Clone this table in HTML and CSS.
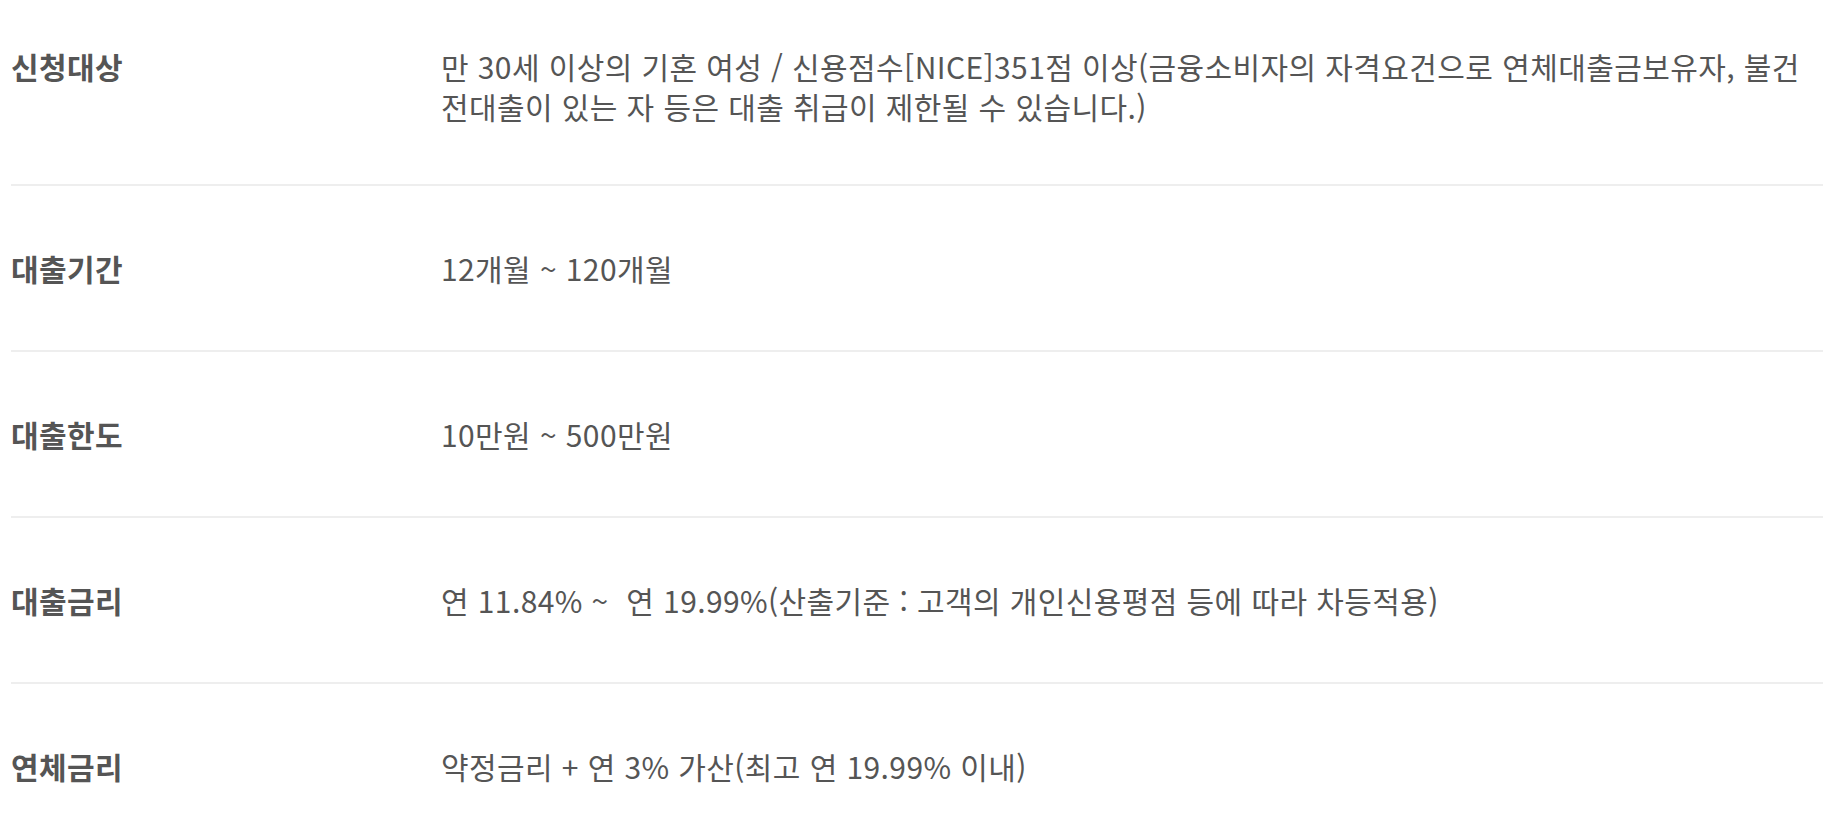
FILE: index.html
```html
<!DOCTYPE html>
<html lang="ko">
<head>
<meta charset="utf-8">
<link rel="stylesheet" href="styles.css">
</head>
<body>
<div class="info-list">
  <div class="info-row first">
    <div class="info-label">신청대상</div>
    <div class="info-value">만 30세 이상의 기혼 여성 / 신용점수[NICE]351점 이상(금융소비자의 자격요건으로 연체대출금보유자, 불건전대출이 있는 자 등은 대출 취급이 제한될 수 있습니다.)</div>
  </div>
  <div class="info-row">
    <div class="info-label">대출기간</div>
    <div class="info-value">12개월 ~ 120개월</div>
  </div>
  <div class="info-row">
    <div class="info-label">대출한도</div>
    <div class="info-value">10만원 ~ 500만원</div>
  </div>
  <div class="info-row">
    <div class="info-label">대출금리</div>
    <div class="info-value">연 11.84% ~&nbsp; 연 19.99%(산출기준 : 고객의 개인신용평점 등에 따라 차등적용)</div>
  </div>
  <div class="info-row">
    <div class="info-label">연체금리</div>
    <div class="info-value">약정금리 + 연 3% 가산(최고 연 19.99% 이내)</div>
  </div>
</div>
</body>
</html>
```
FILE: styles.css
```css
html, body {
  margin: 0;
  padding: 0;
  background: #fff;
}
body {
  font-family: "Noto Sans CJK KR", "Noto Sans", sans-serif;
  color: #555;
}
.info-list {
  padding: 0 9px 0 11px;
}
.info-row {
  display: grid;
  grid-template-columns: 430px 1fr;
  padding: 62px 0;
  border-bottom: 2px solid #eeeeee;
  font-size: 30px;
  line-height: 40px;
  letter-spacing: 0.4px;
}
.info-row.first {
  padding-top: 46px;
  padding-bottom: 58px;
}
.info-label {
  font-weight: 700;
}
.info-value {
  font-weight: 400;
}
```
